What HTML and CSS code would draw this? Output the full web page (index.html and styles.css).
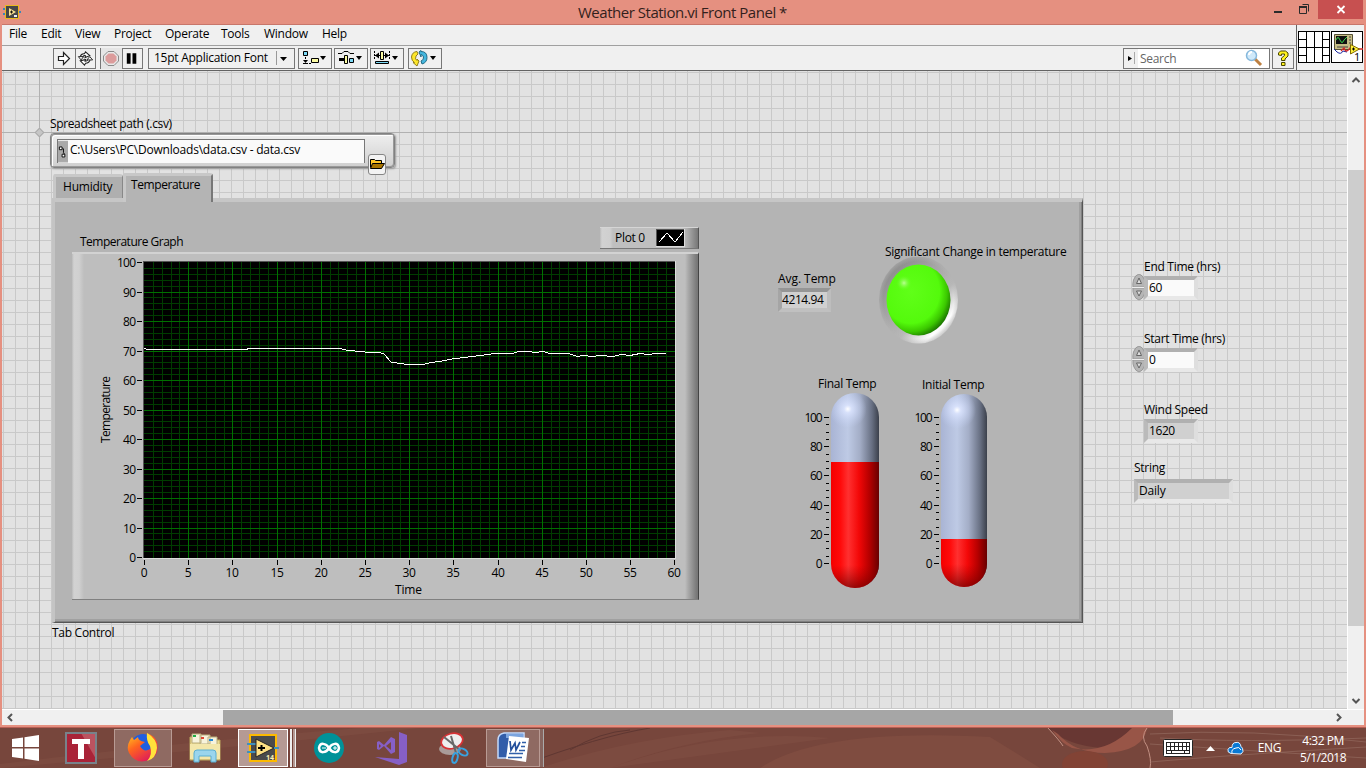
FILE: index.html
```html
<!DOCTYPE html>
<html lang="en">
<head>
<meta charset="utf-8">
<title>Weather Station.vi Front Panel *</title>
<link rel="stylesheet" href="styles.css">
</head>
<body>
<div class="window">
  <header class="titlebar">
    <svg class="app-icon" width="18" height="18" viewBox="0 0 18 18"><path d="M0 6h3M0 11h3M15 9h3" stroke="#3a87b8" stroke-width="2"/><rect x="2.5" y="2.5" width="13" height="13" fill="#474747" stroke="#e9b91d"/><path d="M6 5l7 4-7 4z" fill="#fae38f"/><path d="M7 9h3M8.500 7.500v3" stroke="#111"/><path d="M11 13h3" stroke="#eee" stroke-width="2"/></svg>
    <h1>Weather Station.vi Front Panel *</h1>
    <div class="win-buttons">
      <svg width="102" height="19" viewBox="0 0 102 19"><path d="M13 12h8" stroke="#2b2b2b" stroke-width="2"/><path d="M41.500 4.500h6v7" fill="none" stroke="#2b2b2b"/><path d="M38.500 6.500h7v7h-7z" fill="none" stroke="#2b2b2b"/><path d="M38 7h8" stroke="#2b2b2b" stroke-width="2"/><rect x="57" width="45" height="19" fill="#c75050"/><path d="M76.500 6l7 7M83.500 6l-7 7" stroke="#fff" stroke-width="1.800"/></svg>
    </div>
  </header>
  <div class="chrome">
    <div class="bars">
      <nav class="menu"><span style="width:32px">File</span><span style="width:34px">Edit</span><span style="width:39px">View</span><span style="width:51px">Project</span><span style="width:56px">Operate</span><span style="width:43px">Tools</span><span style="width:58px">Window</span><span>Help</span></nav>
      <div class="toolbar">
        <div class="group">
          <svg width="21" height="21" viewBox="0 0 21 21"><path d="M4.500 8.500h5v-4l6 6-6 6v-4h-5z" fill="#fff" stroke="#222" stroke-width="1.200"/></svg>
          <svg class="split" width="20" height="21" viewBox="0 0 20 21"><path d="M4.500 8.500Q5.500 5 9 5.500l1-2 4.500 4-5 2 .5-2Q7.500 7 7 9zM15 11.500q-1 4-5 4l-1 2-4.500-4.500 5.500-1.500-.500 2q2.500 0 3-2z" fill="#fff" stroke="#222" stroke-width="1.100"/><path d="M2.500 8.500h5.500l-2.700 3.500zM11.500 12l3-3.500 3 3.500z" fill="#fff" stroke="#222"/></svg>
        </div>
        <div class="group stop-pause">
          <svg class="disabled" width="21" height="21" viewBox="0 0 21 21"><path d="M7 3.500h6l4.500 4.500v5l-4.500 4.500H7L2.500 13V8z" fill="#e8e8e8" stroke="#8b8b8b"/><path d="M7.500 5.500h5l3 3v4l-3 3h-5l-3-3v-4z" fill="#dc9c9c"/></svg>
          <svg class="split" width="20" height="21" viewBox="0 0 20 21"><path d="M4 5h4v11H4zM10 5h4v11h-4z"/></svg>
        </div>
        <div class="font-picker"><span>15pt Application Font</span><svg width="19" height="19" viewBox="0 0 19 19"><path d="M1.500 2v14" stroke="#999"/><path d="M5 8h7l-3.500 4z"/></svg></div>
        <div class="group tool"><svg width="32" height="19" viewBox="0 0 32 19"><path d="M4.500 2.500h4v4h-4z" fill="#7bd8f5" stroke="#000"/><path d="M6.500 8v7M4 14.500h8" stroke="#000" stroke-dasharray="2 1"/><path d="M4 11h5l-2.500 3z"/><path d="M12.500 9.500h7v4h-7z" fill="#fafaa2" stroke="#000"/><path d="M21 7h6l-3 4z"/></svg></div>
        <div class="group tool"><svg width="32" height="19" viewBox="0 0 32 19"><path d="M3 4.500h4l2-2h4l2 2h4" fill="none" stroke="#000"/><path d="M4 10.500h5" stroke="#000" stroke-width="3"/><path d="M9.500 6.500h3v8h-3z" fill="#fafaa2" stroke="#000"/><path d="M14.500 9.500h4v4h-4z" fill="#7bd8f5" stroke="#000"/><path d="M21 7h6l-3 4z"/></svg></div>
        <div class="group tool"><svg width="32" height="19" viewBox="0 0 32 19"><path d="M3.500 2v9M18.500 2v9M4 6.500h14" stroke="#000" stroke-dasharray="2 1"/><path d="M4 6.500l4-3v6zM18 6.500l-4-3v6z"/><path d="M9.500 2.500h3v8h-3z" fill="#fafaa2" stroke="#000"/><path d="M4.500 12.500h13v2h-13z" fill="#7bd8f5" stroke="#000"/><path d="M21 7h6l-3 4z"/></svg></div>
        <div class="group tool"><svg width="32" height="19" viewBox="0 0 32 19"><path d="M8 2.500Q3 3 2.500 8q0 4 3 5.500H4l4 3.500 2-5-2-2v1.500q-2.500-1-1-4.500L9 5z" fill="#fde72a" stroke="#93801f"/><path d="M10 3l2-1.500v1q6 0 6 6 0 5-5 6.500l-1-3q3-1 2.500-4-.5-2-2.500-2.500V8z" fill="#44b7df" stroke="#216b86"/><path d="M21 7h6l-3 4z"/></svg></div>
        <div class="search"><svg width="14" height="19" viewBox="0 0 14 19"><path d="M0 0h14v19H0z" fill="#f0f0f0"/><path d="M4 7v5l4-2.500z"/><path d="M10.500 3v12" stroke="#aaa"/></svg><span>Search</span><svg width="18" height="19" viewBox="0 0 18 19"><path d="M10 10l6 6" stroke="#bd8042" stroke-width="3"/><circle cx="6.500" cy="6.500" r="5" fill="#cfe9fa" stroke="#86b8dc" stroke-width="1.500"/><path d="M4 6q0-3 3-3" fill="none" stroke="#fff" stroke-width="2"/></svg></div>
        <div class="group help"><svg width="20" height="19" viewBox="0 0 20 19"><path d="M5.500 6V4l2-2h5l2.500 2v3l-3 3v1.500H8.500V9L11.500 6.500V5h-3v1.500zM8.500 13.500h3.500v3H8.500z" fill="#fff21c" stroke="#4b4700"/></svg></div>
      </div>
    </div>
    <div class="vi-icons">
      <svg width="67" height="45" viewBox="0 0 67 45"><rect x="1.500" y="6.500" width="31" height="31" fill="#fff" stroke="#000"/><path d="M9.500 6v31M17.500 6v31M25.500 6v31M2 14.500h7M9 22.500h16M2 22.500h7M2 30.500h7M25 14.500h8M25 22.500h8M25 30.500h8" stroke="#000"/><rect x="34.500" y="6.500" width="31" height="31" fill="#fff" stroke="#000"/><path d="M37.500 9.500h18v15h-18z" fill="#c6bd85" stroke="#555035"/><path d="M39 11h11v8H39z" fill="#111"/><path d="M39 15q2-5 4 0t4 0l3-3" fill="none" stroke="#35d24b"/><path d="M52 12h2M52 15h2M52 18h2M40 22h11" stroke="#444"/><path d="M37 24l3 3q4 3 6-1l4 1" fill="none" stroke="#1825a0"/><path d="M44 26l3-3q2 6 6 0l3 1h10" fill="none" stroke="#d42525" stroke-width="1.300"/><path d="M53.500 19.500l9 4.500-9 5z" fill="#ffef38" stroke="#806b00"/><path d="M55 24h3M56.500 22.500v3" stroke="#000"/><text x="57" y="36" font-size="11">1</text></svg>
    </div>
  </div>
  <div class="workspace">
    <main class="panel">
      <div class="origin-x"></div><div class="origin-y"></div><div class="origin"></div>
      <div class="label snug" style="left:48px;top:45px">Spreadsheet path (.csv)</div>
      <div class="path-control"><svg width="11" height="23" viewBox="0 0 11 23"><path d="M0 0h11v23H0z" fill="#a9a9a9"/><path d="M1.500 6.500h3v3h-3zM4.500 14.500h3v3h-3z" fill="#fff" stroke="#000"/><path d="M5 8.500h1v4l1 2" stroke="#000" fill="none"/></svg><span>C:\Users\PC\Downloads\data.csv - data.csv</span></div>
      <div class="browse"><svg width="16" height="18" viewBox="0 0 16 18"><path d="M1.500 12.500v-8h4l1 1h6v3" fill="#ffc526" stroke="#000"/><path d="M1.500 13.500l2-5h12l-3 5z" fill="#a87400" stroke="#000"/></svg></div>

      <div class="tabs"><div class="tab">Humidity</div><div class="tab active">Temperature</div></div>
      <section class="tab-page">
        <div class="label tight" style="left:23px;top:32px">Temperature Graph</div>
        <div class="legend"><span>Plot 0</span><svg width="29" height="18" viewBox="0 0 29 18"><path d="M0 0h29v18H0z" fill="#000"/><path d="M0 .5h29M.5 0v18" stroke="#555"/><path d="M0 17.500h29M28.500 0v18" stroke="#ddd"/><path d="M3 13l8-9 8 9 8-10" fill="none" stroke="#fff" shape-rendering="crispEdges"/></svg></div>
        <div class="graph"><svg id="plot" width="626" height="345" viewBox="72 254 626 345"></svg></div>
        <div class="label loose" style="left:721px;top:69px">Avg. Temp</div>
        <div class="field dim" style="left:721px;top:86px;width:53px;height:24px">4214.94</div>
        <svg class="led" width="82" height="88" viewBox="878 257 82 88">
          <defs><linearGradient id="ring" x1=".15" y1=".12" x2=".85" y2=".88"><stop offset="0" stop-color="#8b8b8b"/><stop offset=".4" stop-color="#a8a8a8"/><stop offset=".65" stop-color="#b8b8b8"/><stop offset=".9" stop-color="#fff"/><stop offset="1" stop-color="#ddd"/></linearGradient><radialGradient id="rim"><stop offset=".88" stop-color="#b4b4b4" stop-opacity="0"/><stop offset="1" stop-color="#b4b4b4" stop-opacity=".6"/></radialGradient><radialGradient id="green" cx=".38" cy=".38" r=".66"><stop offset="0" stop-color="#60ff18"/><stop offset=".68" stop-color="#54fa0c"/><stop offset=".86" stop-color="#3bc800"/><stop offset="1" stop-color="#1d7900"/></radialGradient><radialGradient id="spark"><stop offset="0" stop-color="#b9ff92"/><stop offset="1" stop-color="#5cff14" stop-opacity="0"/></radialGradient></defs>
          <ellipse cx="918.500" cy="300" rx="39.500" ry="43.500" fill="url(#ring)"/><ellipse cx="918.500" cy="300" rx="40" ry="44" fill="url(#rim)"/><ellipse cx="918.500" cy="300" rx="32" ry="35.500" fill="url(#green)"/><ellipse cx="904" cy="283" rx="8" ry="8" fill="url(#spark)"/>
        </svg>
        <div class="label" style="left:828px;top:42px">Significant Change in temperature</div>
        <div class="label" style="left:761px;top:174px">Final Temp</div>
        <div class="label" style="left:865px;top:175px">Initial Temp</div>
        <svg class="thermo" id="thermos" width="200" height="200" viewBox="795 390 200 200">
          <defs><linearGradient id="glass"><stop offset="0" stop-color="#a9b4d4"/><stop offset=".35" stop-color="#becae5"/><stop offset=".6" stop-color="#a4aec7"/><stop offset=".85" stop-color="#687083"/><stop offset="1" stop-color="#3b404b"/></linearGradient><linearGradient id="fluid"><stop offset="0" stop-color="#f50000"/><stop offset=".2" stop-color="#ff0b0b"/><stop offset=".36" stop-color="#ff3030"/><stop offset=".58" stop-color="#f30808"/><stop offset=".8" stop-color="#b50000"/><stop offset="1" stop-color="#680000"/></linearGradient><radialGradient id="cap"><stop offset="0" stop-color="#fff"/><stop offset=".2" stop-color="#dae3fd" stop-opacity=".9"/><stop offset="1" stop-color="#c5d2f5" stop-opacity="0"/></radialGradient><linearGradient id="base" x2="0" y2="1"><stop offset="0" stop-color="#900" stop-opacity="0"/><stop offset="1" stop-color="#670000"/></linearGradient></defs>
        </svg>
      </section>
      <div class="label" style="left:50px;top:554px">Tab Control</div>

      <div class="label" style="left:1142px;top:188px">End Time (hrs)</div>
      <svg class="spin" style="top:203px" width="14" height="27" viewBox="0 0 14 27"><use href="#spinner"/></svg>
      <div class="field" style="left:1142px;top:205px;width:54px;height:24px">60</div>
      <div class="label" style="left:1142px;top:260px">Start Time (hrs)</div>
      <svg class="spin" style="top:275px" width="14" height="27" viewBox="0 0 14 27"><g id="spinner"><path d="M7 0q4 1 5.500 6 1 4 .5 7H1q-.5-3 .5-7Q3 1 7 0zM1 14h12q.5 4-1 7-1.500 4-5 5-3.500-1-5-5-1.500-3-1-7z" fill="#b5b5b5" stroke="#999"/><path d="M0 13.500h14" stroke="#eee"/><path d="M4.500 9.500L7 4l2.500 5.500zM4.500 17L7 22l2.500-5z" fill="#ddd" stroke="#666"/></g></svg>
      <div class="field" style="left:1142px;top:277px;width:54px;height:24px">0</div>
      <div class="label" style="left:1142px;top:331px">Wind Speed</div>
      <div class="field dim" style="left:1142px;top:348px;width:54px;height:24px">1620</div>
      <div class="label" style="left:1132px;top:389px">String</div>
      <div class="field dim text" style="left:1132px;top:408px;width:99px;height:24px">Daily</div>
    </main>
    <div class="vscroll"><svg width="16" height="16"><path d="M4.500 11L8 7.500l3.500 3.500" fill="none" stroke="#555" stroke-width="2"/></svg><div class="vthumb"></div><svg width="16" height="16"><path d="M4.500 6L8 9.500 11.500 6" fill="none" stroke="#555" stroke-width="2"/></svg></div>
    <div class="hscroll"><svg width="16" height="15"><path d="M10 4L6.500 7.500 10 11" fill="none" stroke="#555" stroke-width="2"/></svg><div class="hthumb"></div><svg width="16" height="15"><path d="M6 4l3.500 3.500L6 11" fill="none" stroke="#555" stroke-width="2"/></svg></div>
  </div>
</div>
<footer class="taskbar">
  <svg class="wood" width="1366" height="40" viewBox="0 0 1366 40"><path d="M0 36q180-22 360-36h60Q210 22 0 40zM540 40q90-30 190-38l30 3q-80 8-150 35zM610 40q110-40 220-30" fill="#804f43" opacity=".6"/><path d="M760 40q60-40 230-31l50 31z" fill="#8c5545" opacity=".4"/><path d="M570 22q30-18 60-20M520 38q80-30 130-38" fill="none" stroke="#5f3732"/><path d="M1048 0q20 18 55 20 39-3 42-20z" fill="#683733"/><path d="M1052 2q10 14 20 18 33 7 60-20h15q-3 23-42 25-30 0-47-19z" fill="#985547"/><ellipse cx="1085" cy="36" rx="23" ry="13" fill="#824335"/><path d="M1048 0q12 13 15 18M1147 0q-7 9 0 18 5 14 3 22" fill="none" stroke="#c29083"/><path d="M1150 6q100-6 216 8M1150 16q90 6 216 14M1150 34q80-7 216-15M1160 10q80 5 206 0" fill="none" stroke="#977064" opacity=".6"/></svg>
  <div class="apps">
    <svg class="start" width="27" height="26" viewBox="0 0 27 26"><path d="M0 4l11-1.600V12H0zM12.500 2.200L27 0v12H12.500zM0 13.500h11v10L0 22zM12.500 13.500H27V26l-14.500-2.300z" fill="#fff"/></svg>
    <svg width="32" height="32" viewBox="0 0 32 32"><path d="M.5.500h31v31H.5z" fill="#a92338"/><path d="M16 1h15v26z" fill="#bb5360"/><path d="M1 1h30v30H1z" fill="none" stroke="#78828a" stroke-width="2"/><path d="M7 7h18v5h-6v15h-6V12H7z" fill="#fff"/></svg>
    <div class="task"><svg width="32" height="32" viewBox="0 0 32 32"><defs><linearGradient id="fox" x2=".7" y2="1"><stop offset="0" stop-color="#ffcd21"/><stop offset=".45" stop-color="#ff641f"/><stop offset="1" stop-color="#dc175e"/></linearGradient></defs><circle cx="16" cy="14" r="12" fill="#205ee0"/><path d="M3 8l2-3 2 3 4-3q0 4 7 5l-5 4q4 7 10 3 7-5 0-11l-3-5q8 3 10 9 3 14-8 18-13 5-20-7Q-1 15 3 8z" fill="url(#fox)"/><path d="M20 1q10 6 10 15-1 11-10 13 6-6 3-15-4-5-3-13z" fill="#ffe23b"/></svg></div>
    <svg width="34" height="32" viewBox="0 0 34 32"><path d="M2 5h11l2 3h17v20H2z" fill="#e9d88f" stroke="#b9a65e"/><path d="M4 2h9v9H4zM12 3h10v9H12zM20 5h9v9h-9z" fill="#f7f3dc" stroke="#baae7c"/><path d="M5 3h3v2H5z" fill="#1fac45"/><path d="M13 5h3v2h-3z" fill="#db4934"/><path d="M21 7h4v2h-4z" fill="#2589d8"/><path d="M2 12h30v15H2z" fill="#f3e7aa"/><path d="M6 30V21q0-3 3-3h16q3 0 3 3v9h-5v-6H11v6z" fill="#9ad5ed" stroke="#5baed1"/></svg>
    <div class="task current"><svg width="32" height="32" viewBox="0 0 32 32"><path d="M3 3h26v26H3z" fill="#4b4b4b" stroke="#fcb900" stroke-width="2"/><path d="M0 12h9M0 20h9M26 16h6" stroke="#3e91bd" stroke-width="2"/><path d="M9 7l18 9-18 9z" fill="#fde083" stroke="#242424"/><path d="M11 16h7M14.500 13v6" stroke="#000" stroke-width="2"/><text x="19" y="28" font-size="7" font-weight="bold" fill="#fff0b4">14</text></svg></div>
    <svg width="32" height="32" viewBox="0 0 32 32"><circle cx="16" cy="16" r="15" fill="#009299"/><path d="M16 16c-3-5-9-6-10 0 1 6 7 5 10 0s9-6 10 0c-1 6-7 5-10 0z" fill="none" stroke="#fff" stroke-width="2.500"/><path d="M9 16h4M20 16h4M22 14v4" stroke="#fff"/></svg>
    <svg width="33" height="33" viewBox="0 0 33 33"><path d="M24 0l8 3v27l-8 3-24-8 24 2z" fill="#865fc5"/><path fill-rule="evenodd" d="M4 9l5 4 7-8 4 2v13l-4 2-7-8-5 4-2-1V10zM4 12v4l2-2zM11 14l5 4v-8z" fill="#865fc5"/></svg>
    <svg width="32" height="32" viewBox="0 0 32 32"><ellipse cx="12" cy="17" rx="11" ry="6" fill="#a99b99"/><ellipse cx="14" cy="9" rx="11" ry="7.500" transform="rotate(-15 14 9)" fill="#eee" stroke="#d83235" stroke-width="1.800"/><path d="M6 5l16 13M13 4l5 17" stroke="#686868" stroke-width="2"/><ellipse cx="17" cy="26" rx="2.500" ry="5" transform="rotate(15 17 26)" fill="none" stroke="#38a2df" stroke-width="2"/><ellipse cx="25" cy="20" rx="5" ry="3" transform="rotate(30 25 20)" fill="none" stroke="#38a2df" stroke-width="2"/></svg>
    <div class="task word"><svg width="32" height="32" viewBox="0 0 32 32"><path d="M7 1h20v25H1V8q0-6 6-7z" fill="#325da9" stroke="#c3dafc" stroke-width="1.500"/><path d="M9 2h17v4H9z" fill="#7ca5df"/><path d="M12 4l20 2-3 24-20-3z" fill="#fff"/><path d="M13 9l1 9 4-7 1 7 4-8" fill="none" stroke="#234f9b" stroke-width="1.700"/><path d="M25 10.500h4M24 14.500h4M22 18.500h6M12 21.500h14M11 25.500h14" stroke="#315fa9" stroke-width="1.500"/></svg></div>
  </div>
  <div class="tray">
    <svg width="30" height="18" viewBox="0 0 30 18"><rect x=".5" y=".5" width="29" height="17" rx="1" fill="#fff" stroke="#252525"/><path d="M3 3.500h24M3 7.500h24M3 11.500h24M3 14.500h24M3.500 3v12M26.500 3v12M7.500 3v8M11.500 3v8M15.500 3v8M19.500 3v8M23.500 3v8M8.500 11v4M21.500 11v4" stroke="#222"/></svg>
    <svg class="up" width="9" height="5" viewBox="0 0 9 5"><path d="M0 5l4.500-5L9 5z" fill="#fff"/></svg>
    <svg width="17" height="14" viewBox="0 0 17 14"><path d="M4 12.500q-4-1-3-4t4-2q0-5 4-5 4-1 5 4 2 1 2 5l-2 2.500z" fill="#0879d5" stroke="#e6f2ff"/><path d="M5 12q-1-4 4-5 3-2 5 2" fill="none" stroke="#fff"/></svg>
    <span class="lang">ENG</span>
    <div class="clock"><span>4:32 PM</span><span>5/1/2018</span></div>
  </div>
</footer>
<script src="panel.js"></script>
</body>
</html>
```
FILE: styles.css
```css
* { box-sizing: border-box; }
body { margin: 0; width: 1366px; height: 768px; overflow: hidden; font: 12px/16px "Open Sans", "Noto Sans", sans-serif; color: #000; display: flex; flex-direction: column; }
svg { display: block; flex: none; }
text { font-family: "Open Sans", "Noto Sans", sans-serif; }
.window { height: 728px; background: #e59080; display: flex; flex-direction: column; padding: 0 2px 2px; border-bottom: 1px solid #b75f55; }
.titlebar { height: 25px; display: flex; align-items: flex-start; border-bottom: 1px solid #c8766a; }
.app-icon { margin: 3px 0 0 1px; }
.titlebar h1 { font: 15px/25px "Open Sans", sans-serif; letter-spacing: -.48px; margin: 0 0 0 557px; color: #331f1c; white-space: nowrap; }
.win-buttons { margin-left: auto; margin-right: 1px; }
.chrome { height: 46px; display: flex; background: #f0f0f0; border-bottom: 1px solid #646464; }
.bars { flex: 1; }
.menu { height: 21px; display: flex; padding-left: 7px; line-height: 18px; font-size: 12px; letter-spacing: -.25px; border-bottom: 1px solid #a0a0a0; }
.toolbar { height: 24px; padding: 2px 0 0 51px; display: flex; align-items: flex-start; }
.group { display: flex; height: 21px; border: 1px solid #777; background: #f0f0f0; }
.group svg { margin: -1px 0; }
.group .split { border-left: 1px solid #777; }
.stop-pause { margin-left: 4px; }
.disabled { background: #e5e5e5; background-clip: padding-box; }
.font-picker { margin-left: 5px; width: 147px; height: 21px; border: 1px solid #777; display: flex; justify-content: space-between; line-height: 18px; padding-left: 5px; letter-spacing: -.26px; white-space: nowrap; }
.tool { margin-left: 2px; }
.font-picker + .tool { margin-left: 3px; }
.tool svg, .help svg { margin: 0; }
.tool:nth-child(7) { margin-left: 4px; }
.search { width: 147px; height: 21px; margin-left: auto; border: 1px solid #777; background: #fff; display: flex; color: #666; line-height: 20px; letter-spacing: -.3px; }
.search span { margin-left: 2px; flex: 1; }
.search svg:last-child { margin-right: 6px; }
.help { margin: 0 2px; }
.vi-icons { width: 68px; border-left: 1px solid #646464; background: #f0f0f0; }
.workspace { flex: 1; display: grid; grid-template: 638px 16px / 1345px 17px; background: #f0f0f0; }
.panel { position: relative; overflow: hidden; background-color: #e2e2e2; background-image: linear-gradient(90deg, #c9c9c9 1px, transparent 1px), linear-gradient(#c9c9c9 1px, transparent 1px); background-size: 12px 12px; background-position: 1px 0, 0 1px; }
.origin-x { position: absolute; left: 37px; width: 1px; height: 100%; background: #b1b1b1; }
.origin-y { position: absolute; top: 61px; height: 1px; width: 100%; background: #b1b1b1; }
.origin { position: absolute; left: 34px; top: 58px; width: 7px; height: 7px; transform: rotate(45deg); background: #c6c6c6; border: 1px solid #aaa; }
.label { position: absolute; white-space: nowrap; letter-spacing: -.28px; font-size: 12px; }
.label.tight { letter-spacing: -.5px; }
.label.snug { letter-spacing: -.36px; }
.label.loose { letter-spacing: -.05px; }
.path-control { position: absolute; left: 48px; top: 62px; width: 345px; height: 35px; display: flex; padding: 4px 29px 4px 6px; background: linear-gradient(#efefef, #cfcfcf); border: 1px solid #818181; border-radius: 4px; box-shadow: 1px 1px 2px #999, inset 1px 1px #999, inset -1px -1px #999, inset 2px 2px #fff; }
.path-control svg { border-top: 1px solid #777; border-left: 1px solid #777; height: 24px; width: 11px; margin-top: 1px; }
.path-control span { flex: 1; background: #fafafa; border-top: 1px solid #777; border-right: 1px solid #777; margin-top: 1px; height: 24px; padding-left: 2px; line-height: 20px; letter-spacing: -.21px; }
.browse { position: absolute; left: 366px; top: 83px; width: 18px; height: 21px; background: #f3f3f3; border: 1px solid #858585; border-radius: 3px; }
.tabs { position: absolute; left: 51px; top: 102px; display: flex; align-items: flex-end; height: 30px; z-index: 2; }
.tab { height: 24px; width: 70px; margin-bottom: 5px; padding: 3px 0 0 7px; background: #afafaf; border: solid; border-width: 3px 1px 0 3px; border-color: #c8c8c8 #888 #888 #c8c8c8; border-radius: 3px 3px 0 0; line-height: 14px; letter-spacing: -.22px; }
.tab.active { height: 29px; width: 90px; background: #b4b4b4; border-right: 2px solid #777; margin: 0 0 1px; padding: 2px 0 0 5px; letter-spacing: -.4px; }
.tab-page { position: absolute; left: 50px; top: 127px; width: 1031px; height: 425px; background: #b4b4b4; border: solid; border-width: 4px 1px 1px 3px; border-color: #c6c6c6 #555 #555 #c4c4c4; box-shadow: inset -1px -1px #808080, inset -3px -3px #a0a0a0; }
.tab-page > .label { margin-left: 2px; }
.legend { position: absolute; left: 545px; top: 25px; width: 99px; height: 22px; display: flex; align-items: center; padding-left: 15px; border: solid; border-width: 1px 1px 1px 0; border-color: #d5d5d5 #555 #777 #ccc; background: linear-gradient(90deg, #bbb 0, #d2d2d2 2px, #cfcfcf 10px, #bfbfbf 13px, #bfbfbf 83px, #aaa 88px, #777 98px); }
.legend span { width: 41px; letter-spacing: -.3px; }
.graph { position: absolute; left: 17px; top: 50px; width: 627px; height: 348px; border: solid; border-width: 2px 1px 1px 0; border-color: #d2d2d2 #444 #808080; background: linear-gradient(90deg, #bbb 0, #d2d2d2 2px, #d0d0d0 7px, #bebebe 12px, #bebebe 613px, #aaa 616px, #777 625px); }
.field { position: absolute; padding: 0 0 0 1px; background: #fafafa; border: 4px solid; border-color: #b0b0b0 #dedede #e8e8e8 #bababa; line-height: 15px; letter-spacing: -.42px; }
.field.dim { background: #d0d0d0; }
.field.text { letter-spacing: -.2px; }
.tab-page .field { border-color: #959595 #bdbdbd #c0c0c0 #a5a5a5; margin-left: 2px; line-height: 15px; padding-left: 0; }
.led { position: absolute; left: 823px; top: 55px; }
.thermo { position: absolute; left: 740px; top: 188px; }
.spin { position: absolute; left: 1130px; }
.vscroll { border-left: 1px solid #fff; display: flex; flex-direction: column; justify-content: space-between; }
.vthumb { height: 456px; background: #cdcdcd; margin: 83px 0 auto; }
.hscroll { grid-column: 1 / 3; border-top: 1px solid #fff; display: flex; }
.hthumb { width: 950px; height: 15px; background: #a6a6a6; margin: 0 auto 0 205px; }
.hscroll svg:last-child { margin-right: 17px; }
.taskbar { height: 40px; background: #77463c; display: flex; justify-content: space-between; position: relative; color: #fff; }
.wood { position: absolute; inset: 0; }
.apps, .tray { position: relative; display: flex; align-items: center; }
.apps > * { margin-right: 30px; }
.apps .start { margin: 0 26px 0 12px; }
.task { width: 58px; height: 38px; border: 1px solid #b99b94; background: #8f6a62; display: flex; align-items: center; justify-content: center; }
.apps > :nth-child(2) { margin-right: 17px; }
.apps > .task:nth-child(3) { margin-right: 16px; }
.apps > :nth-child(4) { margin-right: 16px; }
.apps > .current { width: 50px; background: #b59a94; border-color: #fff; box-shadow: 2px 0 #744138, 4px 0 #eee, 5px 0 #744138, 7px 0 #b59a94, 8px 0 #eee; margin-right: 25px; }
.apps > .word { width: 54px; margin-left: -14px; box-shadow: 3px 0 #87655f, 4px 0 #aaa; }
.tray { padding-right: 20px; }
.tray .up { margin: 0 12px 0 13px; }
.lang { margin: 0 19px 0 14px; letter-spacing: -.4px; }
.clock { display: flex; flex-direction: column; align-items: center; line-height: 17px; letter-spacing: -.5px; padding-top: 2px; }
```
FILE: panel.js
```js
const draw = (host, markup) => host.insertAdjacentHTML('beforeend', markup);
const line = (x1, y1, x2, y2, color) =>
  `<path d="M${x1} ${y1}L${x2} ${y2}" stroke="${color}" shape-rendering="crispEdges"/>`;

// Temperature graph
const plot = document.getElementById('plot');
const px = v => Math.round(144 + v * 8.84) + 0.5;
const py = v => Math.round(557 - v * 2.95) + 0.5;
let g = '<rect x="143" y="261" width="533" height="298" fill="#ddd"/><rect x="143" y="261" width="532" height="297" fill="#555"/><rect x="144" y="262" width="531" height="296"/>';
for (let x = 0; x <= 60; x++) if (x % 5) g += line(px(x), 262, px(x), 558, '#003c00');
for (let y = 0; y <= 100; y += 2) if (y % 10) g += line(144, py(y), 675, py(y), '#003c00');
for (let x = 5; x < 60; x += 5) g += line(px(x), 262, px(x), 558, '#007000');
for (let y = 10; y < 100; y += 10) g += line(144, py(y), 675, py(y), '#007000');
for (let x = 0; x <= 60; x += 5) {
  g += line(px(x), 560, px(x), 565, '#000');
  g += `<text x="${px(x) - 0.5}" y="577" text-anchor="middle" font-size="12" letter-spacing="-.4">${x}</text>`;
}
for (let y = 0; y <= 100; y += 10) {
  g += line(137, py(y), 142, py(y), '#000');
  g += `<text x="136" y="${py(y) + 4.5}" text-anchor="end" font-size="12" textLength="${y === 100 ? 19 : y ? 13 : 6.5}">${y}</text>`;
}
g += '<text x="408.500" y="594" text-anchor="middle" font-size="12" textLength="27">Time</text>';
g += '<text transform="translate(110 443) rotate(-90)" font-size="12" textLength="67">Temperature</text>';
g += '<polyline fill="none" stroke="#fff" shape-rendering="crispEdges" points="144,348.500 148,349.500 245,349.500 250,348.500 340,348.500 346,350 360,351.500 374,353 380,352.500 384,354 391,362 400,363.500 408,364.500 423,364.500 429,363 442,361 452,359 468,357 484,355 495,353.500 512,353.500 519,351.500 528,351.500 535,352.500 543,351.500 550,353.500 569,353.500 577,356.500 584,355.500 592,356.500 600,355.500 613,356.500 621,354.500 630,355.500 640,353.500 648,354.500 656,353.500 666,353.500"/>';
draw(plot, g);

// Thermometers
function thermometer(x, width, top, bottom, level, scaleX, id) {
  const r = width / 2;
  let s = `<clipPath id="${id}"><rect x="${x}" y="${top}" width="${width}" height="${bottom - top}" rx="${r}"/></clipPath><g clip-path="url(#${id})">`;
  s += `<rect x="${x}" y="${top}" width="${width}" height="200" fill="url(#glass)"/>`;
  s += `<circle cx="${x + r * 0.7}" cy="${top + 16}" r="19" fill="url(#cap)"/>`;
  s += `<rect x="${x}" y="${level}" width="${width}" height="200" fill="url(#fluid)"/>`;
  s += `<rect x="${x}" y="${bottom - 23}" width="${width}" height="23" fill="url(#base)" opacity=".7"/></g>`;
  for (let v = 0; v <= 100; v += 5) {
    const y = Math.round(563 - v * 1.46) + 0.5;
    s += line(v % 20 ? scaleX + 2 : scaleX, y, scaleX + 5, y, '#000');
    if (v % 20 === 0) s += `<text x="${scaleX - 1.500}" y="${y + 4}" font-size="12" text-anchor="end" textLength="${v === 100 ? 18 : v ? 12.500 : 6.200}">${v}</text>`;
  }
  return s;
}
draw(document.getElementById('thermos'),
  thermometer(831, 48, 393, 588, 462, 824, 'final') +
  thermometer(941, 46, 394, 587, 539, 934, 'initial'));
```
